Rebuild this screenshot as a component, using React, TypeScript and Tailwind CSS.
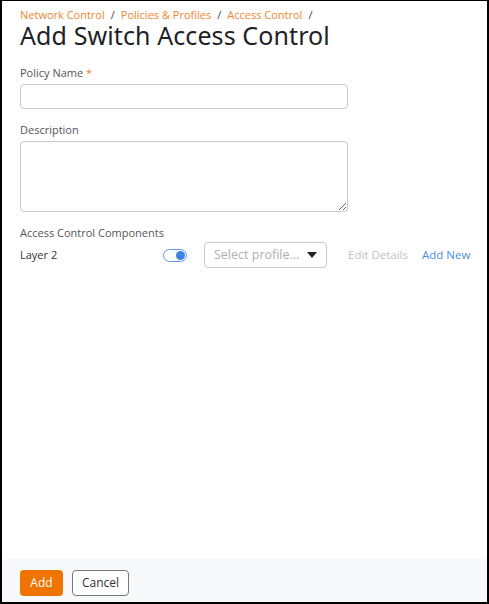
import { useState } from 'react';

export default function App() {
  const [enabled, setEnabled] = useState(true);

  return (
    <div
      className="h-screen w-full flex flex-col border-x-2 border-b-2 border-t border-black bg-white"
      style={{ fontFamily: '"Open Sans", sans-serif' }}
    >
      <main className="flex-1 px-[18px] pt-[6px]">
        <nav className="text-[11px] leading-[15px] text-[#f0862f] flex gap-[6px] whitespace-nowrap">
          <span>Network Control</span>
          <span className="text-[#444]">/</span>
          <span>Policies &amp; Profiles</span>
          <span className="text-[#444]">/</span>
          <span>Access Control</span>
          <span className="text-[#444]">/</span>
        </nav>
        <h1
          className="text-[25px] leading-[26px] text-[#1e2226]"
          style={{ fontFamily: '"Noto Sans", sans-serif', letterSpacing: '0.1px' }}
        >
          Add Switch Access Control
        </h1>

        <div className="mt-[17px] w-[328px]">
          <label className="block text-[11px] leading-[15px] text-[#555]">
            Policy Name <span className="text-[#f0862f]">*</span>
          </label>
          <input className="mt-[4px] block w-full h-[25px] rounded border border-[#c8c8c8] outline-none" />

          <label className="block mt-[13px] text-[11px] leading-[15px] text-[#555]">Description</label>
          <textarea className="mt-[4px] block w-full h-[71px] rounded border border-[#c8c8c8] outline-none" />
        </div>

        <div className="mt-[13px] text-[11px] leading-[15px] text-[#555]">Access Control Components</div>
        <div className="mt-[2px] flex items-center h-[26px] whitespace-nowrap">
          <span className="w-[143px] shrink-0 text-[11px] text-[#333]">Layer 2</span>
          <button
            onClick={() => setEnabled(!enabled)}
            className="shrink-0 w-[24px] h-[13px] rounded-full border border-[#5a9bef] bg-white flex items-center justify-end pr-[1px]"
          >
            <span className="w-[9px] h-[9px] rounded-full bg-[#3b82e6]" />
          </button>
          <div className="shrink-0 ml-[17px] w-[123px] h-[26px] rounded border border-[#c8c8c8] flex items-center justify-between pl-[9px] pr-[9px]">
            <span className="text-[12.5px] text-[#b0b0b0]">Select profile...</span>
            <svg width="10" height="6" viewBox="0 0 10 6">
              <path d="M0 0 L10 0 L5 6 Z" fill="#222" />
            </svg>
          </div>
          <span className="ml-[21px] text-[11.5px] text-[#c2c2c2]">Edit Details</span>
          <span className="ml-[14px] text-[11.5px] text-[#4a8fe0]">Add New</span>
        </div>
      </main>

      <footer className="h-[43px] bg-[#f7f8fa] flex items-start gap-[9px] px-[18px] pt-[11px]">
        <button className="h-[26px] w-[43px] rounded bg-[#ef7300] text-white text-[12px]">Add</button>
        <button className="h-[26px] w-[57px] rounded border border-[#777] bg-white text-[#333] text-[12px]">
          Cancel
        </button>
      </footer>
    </div>
  );
}
